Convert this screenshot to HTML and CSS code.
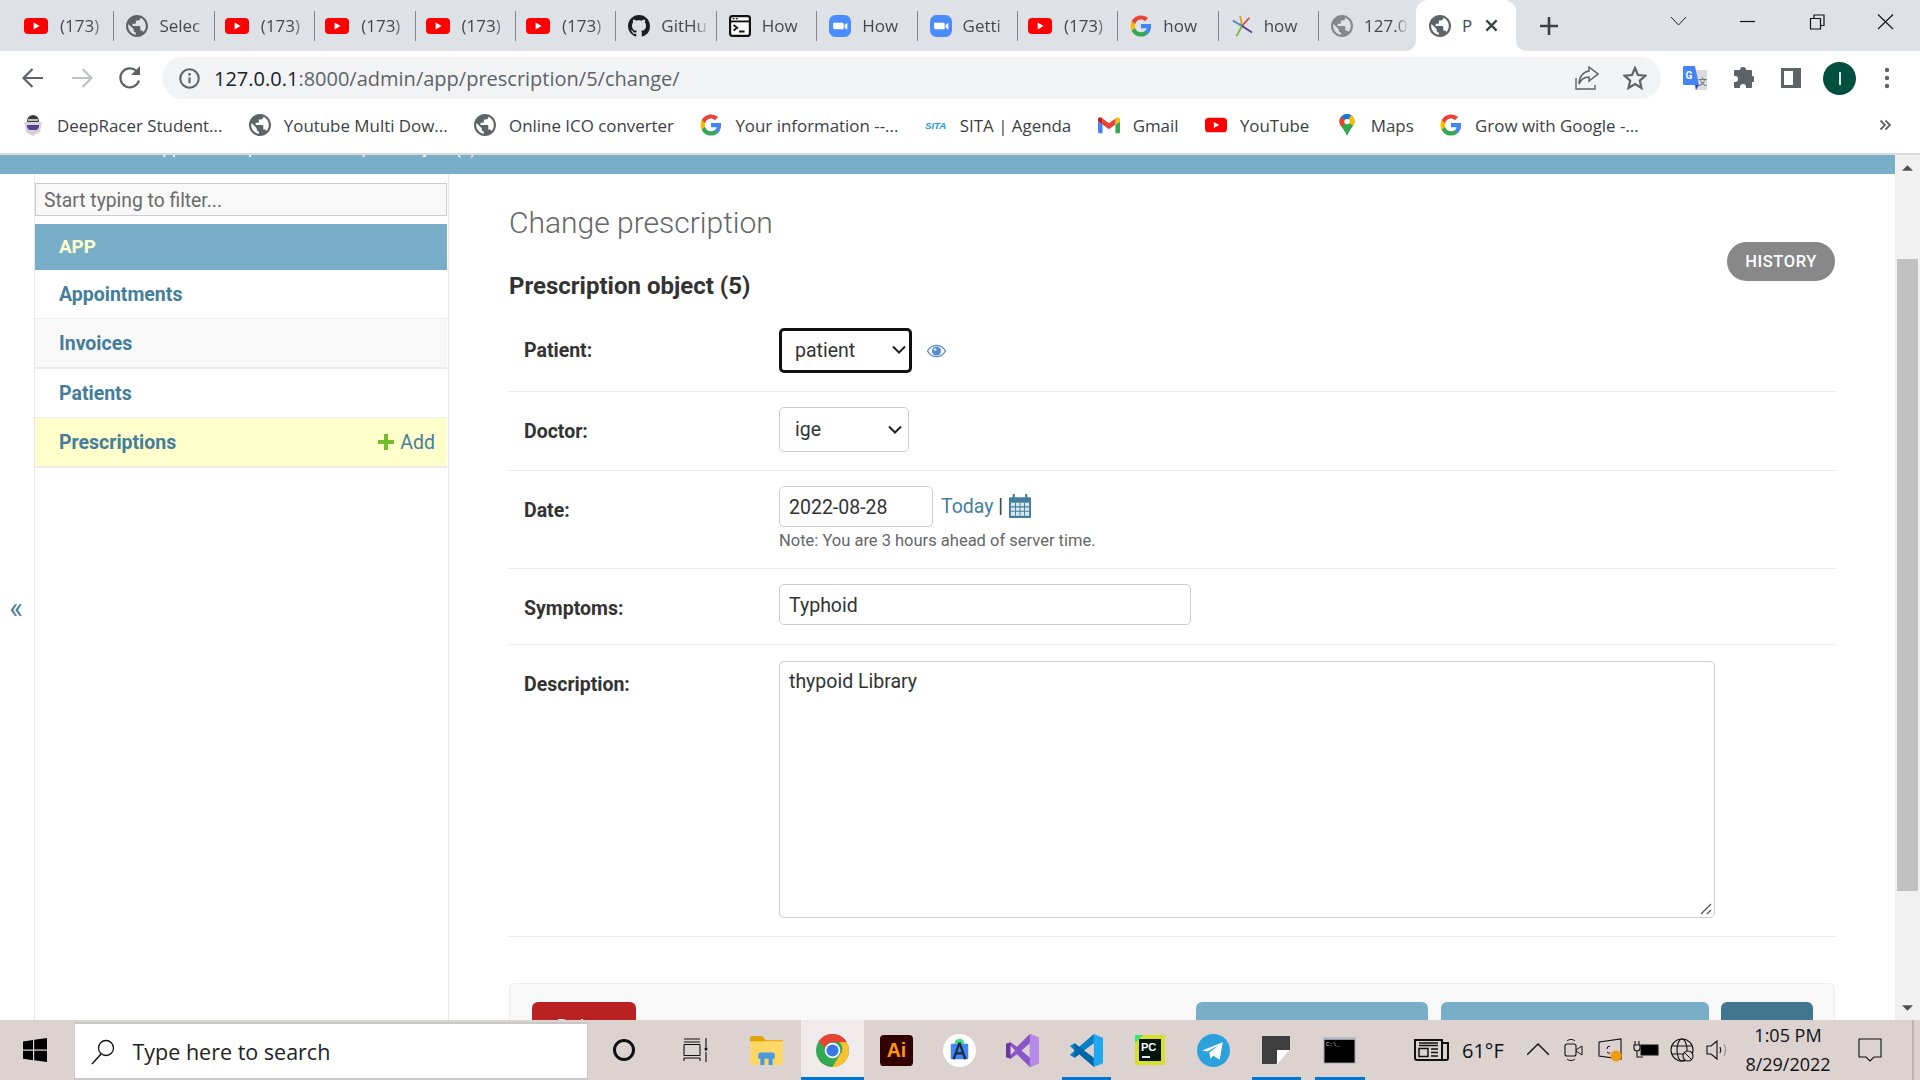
FILE: index.html
```html
<!DOCTYPE html>
<html lang="en">
<head>
    <meta charset="UTF-8">
    <title>Change prescription</title>
    <link rel="stylesheet" href="styles.css">
</head>
<body>

<svg class="sprite" xmlns="http://www.w3.org/2000/svg">
    <symbol id="i-yt" viewBox="0 0 24 16"><rect width="24" height="16" rx="4" fill="#f00"/><path d="M9.600 4.600v6.800l6-3.400z" fill="#fff"/></symbol>
    <symbol id="i-globe" viewBox="2 2 20 20"><path d="M12 2C6.480 2 2 6.480 2 12s4.480 10 10 10 10-4.480 10-10S17.520 2 12 2zm-1 17.930c-3.950-.49-7-3.850-7-7.930 0-.62.08-1.210.21-1.790L9 15v1c0 1.100.9 2 2 2v1.930zm6.900-2.540c-.26-.81-1-1.390-1.900-1.390h-1v-3c0-.55-.45-1-1-1H8v-2h2c.55 0 1-.45 1-1V7h2c1.100 0 2-.9 2-2v-.41c2.930 1.190 5 4.060 5 7.410 0 2.080-.8 3.970-2.100 5.390z" fill="#5f6368"/></symbol>
    <symbol id="i-g" viewBox="0 0 24 24"><path d="M23 12.300c0-.9-.1-1.700-.2-2.400H12v4.500h6.200c-.3 1.400-1.100 2.600-2.300 3.400v2.900h3.700c2.200-2 3.400-5 3.400-8.400z" fill="#4285f4"/><path d="M12 23.500c3.100 0 5.700-1 7.600-2.800l-3.700-2.900c-1 .7-2.300 1.100-3.900 1.100-3 0-5.500-2-6.400-4.800H1.800v3C3.700 21 7.500 23.500 12 23.500z" fill="#34a853"/><path d="M5.600 14.100c-.5-1.400-.5-2.900 0-4.300v-3H1.800c-1.600 3.200-1.600 7.100 0 10.300z" fill="#fbbc05"/><path d="M12 5c1.700 0 3.200.6 4.400 1.700l3.300-3.300C17.700 1.600 15.100.5 12 .5 7.500.5 3.700 3 1.800 6.800l3.800 3C6.500 7 9 5 12 5z" fill="#ea4335"/></symbol>
    <symbol id="i-github" viewBox="0 0 16 16"><path d="M8 0C3.580 0 0 3.580 0 8c0 3.540 2.290 6.530 5.470 7.590.4.07.55-.17.55-.38 0-.19-.01-.82-.01-1.490-2.010.37-2.530-.49-2.690-.94-.09-.23-.48-.94-.82-1.130-.28-.15-.68-.52-.01-.53.63-.01 1.080.58 1.230.82.72 1.210 1.870.87 2.330.66.07-.52.28-.87.51-1.070-1.780-.2-3.640-.89-3.640-3.950 0-.87.31-1.590.82-2.150-.08-.2-.36-1.020.08-2.120 0 0 .67-.21 2.200.82.64-.18 1.320-.27 2-.27.68 0 1.360.09 2 .27 1.530-1.040 2.200-.82 2.200-.82.44 1.100.16 1.920.08 2.120.51.56.82 1.270.82 2.150 0 3.070-1.870 3.750-3.650 3.950.29.25.54.73.54 1.480 0 1.070-.01 1.930-.01 2.200 0 .21.15.46.55.38A8.010 8.010 0 0016 8c0-4.420-3.580-8-8-8z" fill="#1b1f23"/></symbol>
    <symbol id="i-term" viewBox="0 0 24 24"><rect x="1.200" y="1.200" width="21.600" height="21.600" rx="2.500" fill="#fff" stroke="#111" stroke-width="2.400"/><path d="M1 7h22" stroke="#111" stroke-width="2"/><path d="M4 4h2M7.500 4h2" stroke="#111" stroke-width="1.500"/><path d="M5 11l4 3-4 3M11 18h6" fill="none" stroke="#111" stroke-width="2"/></symbol>
    <symbol id="i-zoom" viewBox="0 0 24 24"><rect width="24" height="24" rx="7" fill="#4a8cff"/><path d="M4.500 8.500h10a1.500 1.500 0 011.500 1.500v5.500H6a1.500 1.500 0 01-1.500-1.500zM17 11l3-2.500v7.500l-3-2.500z" fill="#fff"/></symbol>
    <symbol id="i-star" viewBox="0 0 24 24"><path d="M12 12L10 1" stroke="#e0a020" stroke-width="2"/><path d="M12 12l8-9" stroke="#d04a3a" stroke-width="2"/><path d="M12 12l-10-6" stroke="#3a8ad0" stroke-width="2"/><path d="M12 12L6 23" stroke="#7ab93a" stroke-width="2"/><path d="M12 12l11 7" stroke="#5a3a9a" stroke-width="2"/></symbol>
    <symbol id="i-gmail" viewBox="0 0 24 18"><path d="M1.500 18H5V8.500L0 5v11.500A1.500 1.500 0 001.500 18z" fill="#4285f4"/><path d="M19 18h3.500a1.500 1.500 0 001.500-1.500V5l-5 3.500z" fill="#34a853"/><path d="M19 2v6.500L24 5V3c0-2.500-2.500-3-4-1.800z" fill="#fbbc05"/><path d="M5 8.500V2l7 5.200L19 2v6.500l-7 5.200z" fill="#ea4335"/><path d="M0 3v2l5 3.500V2L4 1.200C2.500 0 0 .5 0 3z" fill="#c5221f"/></symbol>
    <symbol id="i-maps" viewBox="0 0 18 26"><path d="M9 0a9 9 0 019 9c0 5-5 8-9 17C5 17 0 14 0 9a9 9 0 019-9z" fill="#34a853"/><path d="M2 3.500A9 9 0 019 0a9 9 0 015 1.500L9 9z" fill="#1a73e8"/><path d="M2 3.500L9 9l-6.500 6C1 13 0 11 0 9c0-2 .7-4 2-5.500z" fill="#ea4335"/><path d="M14 1.500A9 9 0 0118 9c0 2-1 3.500-2 5L9 9z" fill="#fbbc05"/><circle cx="9" cy="9" r="3.200" fill="#fff"/></symbol>
    <symbol id="i-plus" viewBox="0 0 16 16"><path d="M6 0h4v6h6v4h-6v6H6v-6H0V6h6z" fill="#70bf2b"/></symbol>
    <symbol id="i-chrome" viewBox="0 0 34 34"><circle cx="17" cy="17" r="17" fill="#34a853"/><path d="M17 0a17 17 0 0114.700 8.500H17a8.500 8.500 0 00-8 5.500L2.800 7.500A17 17 0 0117 0z" fill="#ea4335"/><path d="M31.700 8.500A17 17 0 0117 34l7.500-12.500a8.500 8.500 0 00-.5-13z" fill="#fbc02d"/><circle cx="17" cy="17" r="8" fill="#fff"/><circle cx="17" cy="17" r="6.200" fill="#3b78e7"/></symbol>
</svg>

<div class="tabstrip">
    <div class="tab"><svg class="favicon fav-yt"><use href="#i-yt"/></svg><span class="tab-text">(173)</span></div>
    <div class="tab"><svg class="favicon"><use href="#i-globe"/></svg><span class="tab-text">Selec</span></div>
    <div class="tab"><svg class="favicon fav-yt"><use href="#i-yt"/></svg><span class="tab-text">(173)</span></div>
    <div class="tab"><svg class="favicon fav-yt"><use href="#i-yt"/></svg><span class="tab-text">(173)</span></div>
    <div class="tab"><svg class="favicon fav-yt"><use href="#i-yt"/></svg><span class="tab-text">(173)</span></div>
    <div class="tab"><svg class="favicon fav-yt"><use href="#i-yt"/></svg><span class="tab-text">(173)</span></div>
    <div class="tab"><svg class="favicon"><use href="#i-github"/></svg><span class="tab-text">GitHu</span></div>
    <div class="tab"><svg class="favicon"><use href="#i-term"/></svg><span class="tab-text">How</span></div>
    <div class="tab"><svg class="favicon"><use href="#i-zoom"/></svg><span class="tab-text">How</span></div>
    <div class="tab"><svg class="favicon"><use href="#i-zoom"/></svg><span class="tab-text">Getti</span></div>
    <div class="tab"><svg class="favicon fav-yt"><use href="#i-yt"/></svg><span class="tab-text">(173)</span></div>
    <div class="tab"><svg class="favicon"><use href="#i-g"/></svg><span class="tab-text">how</span></div>
    <div class="tab"><svg class="favicon"><use href="#i-star"/></svg><span class="tab-text">how</span></div>
    <div class="tab tab-last"><svg class="favicon fav-dim"><use href="#i-globe"/></svg><span class="tab-text">127.0</span></div>
    <div class="tab tab-active">
        <svg class="favicon"><use href="#i-globe"/></svg><span class="tab-letter">P</span>
        <svg class="tab-close" viewBox="0 0 14 14"><path d="M1.500 1.500l11 11M12.500 1.500l-11 11" stroke="#3c4043" stroke-width="2.400"/></svg>
    </div>
    <svg class="new-tab" viewBox="0 0 18 18"><path d="M9 0v18M0 9h18" stroke="#3c4043" stroke-width="2.600"/></svg>
    <div class="win-controls">
        <svg class="win-btn" viewBox="0 0 69 44"><path d="M27 17l7.500 8 7.500-8" fill="none" stroke="#222" stroke-width="1"/></svg>
        <svg class="win-btn" viewBox="0 0 69 44"><path d="M27 21.500h15" stroke="#111" stroke-width="1.200"/></svg>
        <svg class="win-btn" viewBox="0 0 69 44"><path d="M28.500 18.500h10v10.500h-10zM32 18.500V15h10v10.500h-3.500" fill="none" stroke="#111" stroke-width="1.200"/></svg>
        <svg class="win-btn" viewBox="0 0 69 44"><path d="M27 14.500l15 14.500M42 14.500L27 29" stroke="#111" stroke-width="1.100"/></svg>
    </div>
</div>

<div class="toolbar">
    <svg class="nav-btn" viewBox="0 0 48 42"><path d="M34 21H15M23.500 12L14.500 21l9 9" fill="none" stroke="#5f6368" stroke-width="2.200"/></svg>
    <svg class="nav-btn" viewBox="0 0 48 42"><path d="M15 21h19M25.500 12l9 9-9 9" fill="none" stroke="#bdc1c6" stroke-width="2.200"/></svg>
    <svg class="nav-btn" viewBox="0 0 48 42"><path d="M34 23.500A9.500 9.500 0 1131.500 14" fill="none" stroke="#5f6368" stroke-width="2.200"/><path d="M35 9v9h-9z" fill="#5f6368"/></svg>
    <div class="omnibox">
        <svg class="omni-info" viewBox="0 0 20 20"><circle cx="10" cy="10" r="8.800" fill="none" stroke="#5f6368" stroke-width="2"/><path d="M10 9v5.500" stroke="#5f6368" stroke-width="2"/><circle cx="10" cy="6" r="1.300" fill="#5f6368"/></svg>
        <div class="url"><span class="url-host">127.0.0.1</span>:8000/admin/app/prescription/5/change/</div>
        <svg class="omni-icon share" viewBox="0 0 24 24"><path d="M1 12v11h19v-4" fill="none" stroke="#5f6368" stroke-width="1.400"/><path d="M14 1l9 7-9 7v-4c-5 0-8 2-10 7 0-7 4-12 10-13z" fill="none" stroke="#5f6368" stroke-width="1.500"/></svg>
        <svg class="omni-icon star" viewBox="0 0 24 24"><path d="M12 2l3 7 7.500.7-5.700 5 1.700 7.300-6.500-3.900L5.500 22l1.700-7.300-5.700-5L9 9z" fill="none" stroke="#5f6368" stroke-width="2.200"/></svg>
    </div>
    <div class="ext-icons">
        <svg class="ext translate" viewBox="0 0 24 24"><path d="M9 4h14a1 1 0 011 1v18a1 1 0 01-1 1H12z" fill="#dadce0"/><text x="15" y="19" class="tr-zi">文</text><path d="M1 0h11l4 19H1a1 1 0 01-1-1V1a1 1 0 011-1z" fill="#4285f4"/><path d="M12 19h4l-3 5z" fill="#3449b8"/><text x="2.500" y="13" class="tr-g">G</text></svg>
        <svg class="ext" viewBox="0 0 22 22"><path d="M8 3a3 3 0 016 0h5a1 1 0 011 1v5a3 3 0 010 6v5a1 1 0 01-1 1h-5v-1a3 3 0 00-6 0v1H3a1 1 0 01-1-1v-5h1a3 3 0 000-6H2V4a1 1 0 011-1z" fill="#5f6368"/></svg>
        <svg class="ext" viewBox="0 0 22 22"><rect x="1" y="1" width="20" height="20" fill="#5f6368"/><rect x="4" y="4" width="9" height="14" fill="#fff"/></svg>
        <div class="avatar"><span class="avatar-bar"></span></div>
        <svg class="ext ext-last" viewBox="0 0 22 22"><circle cx="11" cy="3" r="2.200" fill="#5f6368"/><circle cx="11" cy="11" r="2.200" fill="#5f6368"/><circle cx="11" cy="19" r="2.200" fill="#5f6368"/></svg>
    </div>
</div>

<div class="bookmarks">
    <div class="bm"><svg class="bm-icon" viewBox="0 0 22 22"><circle cx="11" cy="7" r="6" fill="#3a3a3a"/><path d="M2 8h18l-2 10-7 4-7-4z" fill="#d5d2dc"/><path d="M5 11h12v2l-2 3H7l-2-3z" fill="#5a3f8f"/><path d="M6 6h10" stroke="#eee" stroke-width="1.500"/></svg>DeepRacer Student...</div>
    <div class="bm"><svg class="bm-icon"><use href="#i-globe"/></svg>Youtube Multi Dow...</div>
    <div class="bm"><svg class="bm-icon"><use href="#i-globe"/></svg>Online ICO converter</div>
    <div class="bm"><svg class="bm-icon"><use href="#i-g"/></svg>Your information --...</div>
    <div class="bm"><svg class="bm-icon" viewBox="0 0 24 22"><text x="0" y="15" class="sita">SITA</text></svg>SITA | Agenda</div>
    <div class="bm"><svg class="bm-icon"><use href="#i-gmail"/></svg>Gmail</div>
    <div class="bm"><svg class="bm-icon"><use href="#i-yt"/></svg>YouTube</div>
    <div class="bm"><svg class="bm-icon"><use href="#i-maps"/></svg>Maps</div>
    <div class="bm"><svg class="bm-icon"><use href="#i-g"/></svg>Grow with Google -...</div>
    <svg class="bm-more" viewBox="0 0 12 12"><path d="M1.500 1.500L6 6l-4.500 4.500M6.500 1.500L11 6l-4.500 4.500" fill="none" stroke="#5f6368" stroke-width="1.800"/></svg>
</div>

<div class="page-area">
    <div class="page">
        <div class="crumbs"><div class="crumbs-text">Home › App › Prescriptions › Prescription object (5)</div></div>
        <div class="main">
            <div class="nav-toggle">«</div>
            <nav class="sidebar">
                <input class="nav-filter" type="text" placeholder="Start typing to filter...">
                <div class="app-title">APP</div>
                <div class="model">Appointments</div>
                <div class="model model-alt">Invoices</div>
                <div class="model model-thin">Patients</div>
                <div class="model model-current">Prescriptions<span class="add-link"><svg class="add-icon"><use href="#i-plus"/></svg>Add</span></div>
            </nav>
            <div class="content">
                <div class="content-head">
                    <div>
                        <h1>Change prescription</h1>
                        <h2>Prescription object (5)</h2>
                    </div>
                    <a class="history">HISTORY</a>
                </div>
                <div class="form-row row-patient">
                    <label>Patient:</label>
                    <select class="select-focus"><option>patient</option></select>
                    <svg class="eye" viewBox="0 0 20 14"><path d="M10 1c4 0 7.500 2.700 9.500 6-2 3.300-5.500 6-9.500 6S2.500 10.300.5 7C2.500 3.700 6 1 10 1z" fill="#fff" stroke="#5a8ecb" stroke-width="1.400"/><circle cx="10" cy="7" r="4.800" fill="#5a8ecb"/><circle cx="8.500" cy="5.500" r="1.500" fill="#cfe0f2"/></svg>
                </div>
                <div class="form-row">
                    <label>Doctor:</label>
                    <select class="select-plain"><option>ige</option></select>
                </div>
                <div class="form-row row-date">
                    <label>Date:</label>
                    <div>
                        <div class="date-line">
                            <input class="input-date" type="text" value="2022-08-28">
                            <span class="shortcuts"><a>Today</a> | </span>
                            <svg class="calendar" viewBox="0 0 23 22" preserveAspectRatio="none"><path d="M0 4a1 1 0 011-1h21a1 1 0 011 1v17a1 1 0 01-1 1H1a1 1 0 01-1-1z" fill="#447e9b"/><path d="M2 8h19v12H2z" fill="#d8e6ee"/><path d="M2 11.800h19M2 15.800h19M6.800 8v12M11.500 8v12M16.200 8v12" stroke="#447e9b" stroke-width="1"/><path d="M5 1v5M18 1v5" stroke="#447e9b" stroke-width="2.400" stroke-linecap="round"/></svg>
                        </div>
                        <div class="timezone">Note: You are 3 hours ahead of server time.</div>
                    </div>
                </div>
                <div class="form-row row-symptoms">
                    <label>Symptoms:</label>
                    <input class="input-text" type="text" value="Typhoid">
                </div>
                <div class="form-row row-description">
                    <label>Description:</label>
                    <div class="area-wrap">
                        <textarea class="input-area">thypoid Library</textarea>
                        <svg class="area-grip" viewBox="0 0 12 12"><path d="M1 11L11 1M7 11l4-4" stroke="#555" stroke-width="1.300"/></svg>
                    </div>
                </div>
                <div class="submit-row">
                    <a class="btn btn-delete">Delete</a>
                    <a class="btn btn-save btn-addanother"></a>
                    <a class="btn btn-save btn-continue"></a>
                    <a class="btn btn-default"></a>
                </div>
            </div>
        </div>
    </div>
    <div class="scrollbar">
        <svg class="scroll-arrow" viewBox="0 0 12 6"><path d="M6 0l6 6H0z" fill="#505050"/></svg>
        <div class="scroll-thumb"></div>
        <svg class="scroll-arrow" viewBox="0 0 12 6"><path d="M0 0h12L6 6z" fill="#505050"/></svg>
    </div>
</div>

<div class="taskbar">
    <div class="start">
        <svg class="win-logo" viewBox="0 0 24 24"><path d="M0 3.400l10-1.400v9.500H0zM11.200 1.800L24 0v11.500H11.200zM0 12.700h10v9.500L0 20.800zM11.200 12.700H24V24l-12.800-1.800z" fill="#000"/></svg>
    </div>
    <div class="search-box">
        <svg class="search-icon" viewBox="0 0 24 26"><circle cx="15" cy="9" r="7.500" fill="none" stroke="#111" stroke-width="1.300"/><path d="M10 15L1 25" stroke="#111" stroke-width="1.500"/></svg>
        Type here to search
    </div>
    <div class="tb-btn tb-wide"><svg class="tb-icon" viewBox="0 0 24 24"><circle cx="12" cy="12" r="9.500" fill="none" stroke="#111" stroke-width="3"/></svg></div>
    <div class="tb-btn tb-wide"><svg class="tb-icon tb-taskview" viewBox="0 0 26 24"><path d="M1 1h16M1 4h16M1 6.500v11M17 6.500v11M1 6.500h16M1 17.500h16M1 20h16M1 20v3M17 20v3M23 0v9M23 14v10" fill="none" stroke="#111" stroke-width="1.100"/><rect x="21.700" y="9.500" width="2.600" height="3" fill="#111"/></svg></div>
    <div class="tb-btn tb-explorer"><svg class="tb-icon tb-big" viewBox="0 0 32 28"><path d="M0 2a2 2 0 012-2h10l3 4h17v4H0z" fill="#e0a30b"/><path d="M0 5h32v21a2 2 0 01-2 2H2a2 2 0 01-2-2z" fill="#ffd766"/><path d="M10 28v-6H8v-4a2 2 0 012-2h12a2 2 0 012 2v4h-2v6h-4v-6h-4v6z" fill="#4a9ae0"/></svg></div>
    <div class="tb-btn tb-chrome"><svg class="tb-icon tb-big"><use href="#i-chrome"/></svg></div>
    <div class="tb-btn"><svg class="tb-icon tb-big" viewBox="0 0 34 32"><rect width="34" height="32" rx="4" fill="#330000"/><text x="17" y="23" class="ai-text">Ai</text></svg></div>
    <div class="tb-btn"><svg class="tb-icon tb-big" viewBox="0 0 34 34"><circle cx="17" cy="17" r="17" fill="#fff"/><path d="M12 10a5 5 0 0110 0z" fill="#3ddc84"/><rect x="8" y="10" width="18" height="16" rx="1" fill="#4285f4"/><path d="M17 9l-6 17M17 9l6 17M13 20h8" stroke="#1c2b40" stroke-width="2.400" fill="none"/></svg></div>
    <div class="tb-btn"><svg class="tb-icon tb-big" viewBox="0 0 36 36"><path d="M26 0l10 4v28l-10 4-14-14-7 5-5-2V11l5-2 7 5zM26 10l-9 8 9 8z" fill="#8a54c9"/><path d="M26 0l10 4v28l-10 4z" fill="#b58ae8"/><path d="M0 11l5-2v18l-5-2z" fill="#68379e"/><path d="M5 13v10l5-5z" fill="#dcd3d1"/></svg></div>
    <div class="tb-btn tb-running"><svg class="tb-icon tb-big" viewBox="0 0 36 36"><path d="M26 0l10 4v28l-10 4z" fill="#1fa8f0"/><path d="M26 0v10L10 22l-5 4-5-3 5-5-5-5 5-3 5 4z" fill="#0a7ec2"/><path d="M26 36V26L10 14l-5-4 0 16 5-4 16 14z" fill="#0065a9"/></svg></div>
    <div class="tb-btn"><svg class="tb-icon tb-pc" viewBox="0 0 30 30"><rect width="30" height="30" fill="#d8e02c"/><path d="M0 0h8L0 8z" fill="#3de07a"/><rect x="4" y="4" width="22" height="22" fill="#03140c"/><text x="6" y="16" class="pc-text">PC</text><path d="M7 22h8" stroke="#fff" stroke-width="1.800"/></svg></div>
    <div class="tb-btn"><svg class="tb-icon tb-big" viewBox="0 0 32 32"><circle cx="16" cy="16" r="16" fill="#2aa1da"/><path d="M5 16l20-8-3 17-6-4-3 3-1-6 9-7-11 6z" fill="#fff"/></svg></div>
    <div class="tb-btn tb-running"><svg class="tb-icon tb-sticky" viewBox="0 0 28 28"><rect width="28" height="28" fill="#3f3f3f"/><path d="M28 14v14H14z" fill="#dcd3d1"/><path d="M28 14L15 28V14z" fill="#fff"/></svg></div>
    <div class="tb-btn tb-running"><svg class="tb-icon tb-big" viewBox="0 0 34 28"><rect width="34" height="28" fill="#b8bcc4"/><rect x="1.500" y="3" width="31" height="23.500" fill="#000"/><text x="3" y="9.500" class="cmd-text">C:\_</text></svg></div>
    <div class="tray">
        <svg class="tray-news" viewBox="0 0 36 24"><path d="M1 2h27v20H3a2 2 0 01-2-2zM28 5h6v15a2 2 0 01-2 2h-4" fill="none" stroke="#111" stroke-width="2"/><path d="M5 5h19M5 7.500h19" stroke="#111" stroke-width="1.500"/><rect x="5" y="10.500" width="9" height="8" fill="none" stroke="#111" stroke-width="1.500"/><path d="M17 11h7M17 14.500h7M17 18h7" stroke="#111" stroke-width="1.500"/></svg>
        <span class="tray-temp">61°F</span>
        <div class="tray-cell"><svg class="tray-icon" viewBox="0 0 20 20"><path d="M1 14l9-9 9 9" fill="none" stroke="#111" stroke-width="1.200"/></svg></div>
        <div class="tray-cell"><svg class="tray-icon" viewBox="0 0 20 24"><rect x="1" y="6" width="11" height="12" rx="2" fill="none" stroke="#111" stroke-width="1.100"/><path d="M12 12l6-4v9l-6-4M3 3c2-2 6-2 8 0M3 21c2 2 6 2 8 0" fill="none" stroke="#111" stroke-width="1"/></svg></div>
        <div class="tray-cell"><svg class="tray-icon" viewBox="0 0 24 24"><path d="M1 4l22-3v20L1 18z" fill="none" stroke="#111" stroke-width="1.100"/><path d="M12 8a3 3 0 00-3 3M9 14a3 3 0 003 1" fill="none" stroke="#111" stroke-width="1"/><circle cx="18" cy="18" r="5.500" fill="#f59a0c"/></svg></div>
        <div class="tray-cell"><svg class="tray-icon tray-wide" viewBox="0 0 26 20"><rect x="8" y="5" width="17" height="10" fill="#000" stroke="#111" stroke-width="1"/><path d="M2 1v4M6 1v4M1 5h6v3a3 3 0 01-6 0zM4 11v6h6" fill="none" stroke="#111" stroke-width="1.100"/></svg></div>
        <div class="tray-cell"><svg class="tray-icon" viewBox="0 0 24 24"><circle cx="12" cy="12" r="11" fill="none" stroke="#111" stroke-width="1.100"/><ellipse cx="12" cy="12" rx="5" ry="11" fill="none" stroke="#111" stroke-width="1.100"/><path d="M1 8h22M1 16h22" stroke="#111" stroke-width="1"/><circle cx="18" cy="18" r="5" fill="#dcd3d1" stroke="#111" stroke-width="1.100"/><path d="M14.500 14.500l7 7" stroke="#111" stroke-width="1"/></svg></div>
        <div class="tray-cell"><svg class="tray-icon" viewBox="0 0 24 24"><path d="M1 8h4l6-5v18l-6-5H1z" fill="none" stroke="#111" stroke-width="1.100"/><path d="M14 9c1 2 1 4 0 6" fill="none" stroke="#111" stroke-width="1.100"/><path d="M18 6c2 4 2 8 0 12" fill="none" stroke="#8a8a8a" stroke-width="1"/></svg></div>
        <div class="clock"><div>1:05 PM</div><div>8/29/2022</div></div>
        <div class="notif"><svg class="tray-notif" viewBox="0 0 24 24"><path d="M1 1h22v18h-7l-4 4-4-4H1z" fill="none" stroke="#111" stroke-width="1.100"/></svg></div>
        <div class="show-desktop"></div>
    </div>
</div>

</body>
</html>
```

FILE: styles.css
```css
* {
    box-sizing: border-box;
}

html, body {
    margin: 0;
    padding: 0;
    height: 1080px;
    overflow: hidden;
}

body {
    font-family: "Open Sans", "Noto Sans", sans-serif;
    background: #fff;
    color: #333;
}

.sprite {
    display: block;
    width: 0;
    height: 0;
}

/* browser tabs */
.tabstrip {
    display: flex;
    align-items: stretch;
    height: 51px;
    padding-left: 14px;
    background: #dee1e6;
}

.tab {
    display: flex;
    align-items: center;
    width: 100.400px;
    height: 51px;
    padding: 0 8px 0 10px;
    position: relative;
    font-size: 17px;
    color: #45494e;
}

.tab::after {
    content: "";
    position: absolute;
    right: 0;
    top: 11px;
    width: 1px;
    height: 30px;
    background: #83878c;
}

.tab-last {
    width: 96.800px;
}

.tab-last::after {
    display: none;
}

.favicon {
    flex: 0 0 22px;
    width: 22px;
    height: 22px;
    margin: 0 11px 0 2px;
}

.fav-yt {
    flex: 0 0 24px;
    width: 24px;
    height: 16px;
    margin: 0 12px 0 0;
}

.fav-dim {
    opacity: 0.7;
}

.tab-text {
    flex: 1;
    overflow: hidden;
    white-space: nowrap;
    -webkit-mask-image: linear-gradient(to right, #000 72%, transparent 100%);
    mask-image: linear-gradient(to right, #000 72%, transparent 100%);
}

.tab-active {
    background: #fff;
    border-radius: 12px 12px 0 0;
    padding: 0 0 0 11px;
}

.tab-active::before, .tab-active::after {
    content: "";
    display: block;
    position: absolute;
    top: auto;
    bottom: 0;
    width: 10px;
    height: 10px;
}

.tab-active::before {
    left: -10px;
    background: radial-gradient(circle at 0 0, transparent 9.500px, #fff 10px);
}

.tab-active::after {
    right: -10px;
    background: radial-gradient(circle at 100% 0, transparent 9.500px, #fff 10px);
}

.tab-letter {
    width: 23px;
}

.tab-close {
    width: 13px;
    height: 13px;
}

.new-tab {
    width: 18px;
    height: 18px;
    margin: 17px 0 0 24px;
}

.win-controls {
    display: flex;
    margin-left: auto;
    margin-right: 0;
}

.win-btn {
    width: 69px;
    height: 44px;
}

/* address bar */
.toolbar {
    display: flex;
    height: 52px;
    padding: 6px 0 0 9px;
    background: #fff;
}

.nav-btn {
    flex: 0 0 48px;
    height: 42px;
}

.omnibox {
    display: flex;
    align-items: center;
    flex: 0 0 1499px;
    height: 42px;
    margin-left: 9px;
    padding: 0 14px 0 17px;
    border-radius: 21px;
    background: #f1f3f4;
}

.omni-info {
    width: 21px;
    height: 21px;
}

.url {
    flex: 1;
    margin-left: 14px;
    font-size: 20px;
    color: #5f6368;
}

.url-host {
    color: #202124;
}

.omni-icon {
    width: 24px;
    height: 24px;
}

.share {
    margin-right: 24px;
}

.ext-icons {
    display: flex;
    align-items: center;
    height: 42px;
    margin-left: 22px;
}

.ext {
    flex: 0 0 22px;
    height: 22px;
    margin-right: 26px;
}

.ext-last {
    margin-right: 0;
}

.translate {
    flex-basis: 24px;
    height: 24px;
    margin-right: 25px;
}

.tr-g {
    font: bold 10px "Roboto", sans-serif;
    fill: #fff;
}

.tr-zi {
    font: 9px "Noto Sans CJK SC", sans-serif;
    fill: #5f6368;
}

.avatar {
    display: flex;
    align-items: center;
    justify-content: center;
    flex: 0 0 33px;
    height: 33px;
    margin: 0 20px 0 -5px;
    border-radius: 50%;
    background: #014f3f;
}

.avatar-bar {
    width: 2px;
    height: 13px;
    background: #d8e6e0;
}

/* bookmarks */
.bookmarks {
    display: flex;
    align-items: center;
    height: 52px;
    padding: 0 0 6px 22px;
    background: #fff;
    border-bottom: 2px solid #dadada;
    font-size: 16.900px;
    color: #3c4043;
}

.bm {
    display: flex;
    align-items: center;
    margin-right: 26.400px;
    white-space: nowrap;
}

.bm-icon {
    width: 22px;
    height: 22px;
    margin-right: 13px;
}

.sita {
    font: italic bold 10.500px "Liberation Sans", sans-serif;
    fill: #1e9ad6;
}

.bm-more {
    width: 12px;
    height: 12px;
    margin-left: auto;
    margin-right: 29px;
}

/* page under the browser chrome */
.page-area {
    display: flex;
    height: 865px;
}

.page {
    flex: 1;
    overflow: hidden;
    font-family: Roboto, sans-serif;
}

.crumbs {
    height: 19px;
    overflow: hidden;
    background: #79aec8;
}

.crumbs-text {
    margin-top: -17px;
    padding-left: 92px;
    line-height: 20px;
    font-size: 17px;
    color: #fff;
    white-space: nowrap;
}

.main {
    display: flex;
    height: 846px;
}

.nav-toggle {
    display: flex;
    align-items: center;
    justify-content: center;
    flex: 0 0 35px;
    padding: 22px 2px 0 0;
    border-right: 1px solid #eaeaea;
    font-size: 29px;
    color: #447e9b;
}

.sidebar {
    flex: 0 0 414px;
    padding: 9px 1px 0 0;
    border-right: 1px solid #eaeaea;
}

.nav-filter {
    display: block;
    width: 100%;
    height: 33px;
    padding: 1px 8px 0;
    border: 1px solid #ccc;
    border-radius: 0;
    background: #f8f8f8;
    font: 19.300px Roboto, sans-serif;
}

.nav-filter::placeholder {
    color: #6b6b6b;
}

.app-title {
    height: 46px;
    margin-top: 8px;
    padding-left: 24px;
    line-height: 46px;
    background: #79aec8;
    font-size: 18.800px;
    font-weight: 700;
    color: #ffc;
}

.model {
    display: flex;
    align-items: center;
    justify-content: space-between;
    height: 49px;
    padding: 0 12px 0 24px;
    border-bottom: 1px solid #eee;
    font-size: 19.500px;
    font-weight: 700;
    color: #447e9b;
}

.model-alt {
    height: 50px;
    background: #f8f8f8;
    border-bottom: 2px solid #eaeaea;
}

.model-thin {
    height: 49px;
}

.model-current {
    height: 50px;
    background: #ffc;
    border-bottom: 2px solid #eaeaea;
}

.add-link {
    display: flex;
    align-items: center;
    font-weight: 400;
}

.add-icon {
    width: 16px;
    height: 16px;
    margin-right: 6px;
}

.content {
    flex: 1;
    padding: 0 60px;
}

.content-head {
    display: flex;
    justify-content: space-between;
    height: 136px;
}

h1 {
    margin: 30px 0 0;
    line-height: 38px;
    font-size: 30px;
    font-weight: 300;
    color: #666;
}

h2 {
    margin: 30px 0 0;
    line-height: 28px;
    font-size: 24px;
    font-weight: 700;
    color: #333;
}

.history {
    align-self: flex-start;
    margin-top: 68px;
    padding: 0 18px;
    line-height: 39px;
    border-radius: 20px;
    background: #888;
    font-size: 16.500px;
    font-weight: 500;
    letter-spacing: 0.6px;
    color: #fff;
}

.form-row {
    display: flex;
    padding: 15px 0 18px;
    border-bottom: 1px solid #eaeaea;
    font-size: 19.500px;
}

.row-patient {
    align-items: center;
    height: 82px;
    padding: 0 0 1px;
}

.row-date {
    padding-bottom: 16px;
}

.row-symptoms {
    padding-bottom: 19px;
}

.row-description {
    padding-top: 16px;
}

.form-row label {
    flex: 0 0 270px;
    padding: 13px 0 0 15px;
    font-weight: 700;
    color: #333;
}

.row-patient label {
    padding-top: 1px;
}

.row-description label {
    padding-top: 12px;
}

select, .input-date, .input-text, .input-area {
    font: 19.500px Roboto, sans-serif;
    color: #333;
    background-color: #fff;
}

select {
    appearance: none;
    -webkit-appearance: none;
    height: 45px;
    padding: 0 0 0 15px;
    border-radius: 5px;
    background-image: url("data:image/svg+xml,%3Csvg xmlns='http://www.w3.org/2000/svg' width='14' height='9'%3E%3Cpath d='M1 1.500l6 6 6-6' fill='none' stroke='%23222' stroke-width='2'/%3E%3C/svg%3E");
    background-repeat: no-repeat;
    background-size: 14px 9px;
}

.select-focus {
    width: 133px;
    padding-left: 13px;
    border: 3px solid #111;
    outline: none;
    background-position: 110px 14px;
}

.select-plain {
    width: 130px;
    border: 1px solid #ccc;
    background-position: 108px 17px;
}

.eye {
    width: 19px;
    height: 14px;
    margin: 2px 0 0 15px;
}

.date-line {
    display: flex;
    align-items: center;
}

.input-date {
    width: 154px;
    height: 41px;
    padding: 1px 9px 0;
    border: 1px solid #ccc;
    border-radius: 5px;
}

.shortcuts {
    margin-left: 8px;
    white-space: pre;
    font-size: 19.500px;
    margin-top: -1px;
}

.shortcuts a {
    color: #447e9b;
}

.calendar {
    width: 22px;
    height: 24px;
    margin: -1px 0 0 1px;
}

.timezone {
    margin-top: 2px;
    line-height: 23px;
    font-size: 16.500px;
    color: #666;
}

.input-text {
    width: 412px;
    height: 41px;
    padding: 1px 9px 0;
    border: 1px solid #ccc;
    border-radius: 5px;
}

.area-wrap {
    position: relative;
}

.input-area {
    display: block;
    width: 936px;
    height: 257px;
    padding: 8px 9px;
    border: 1px solid #ccc;
    border-radius: 5px;
    outline: none;
    resize: none;
}

.area-grip {
    position: absolute;
    right: 3px;
    bottom: 3px;
    width: 12px;
    height: 12px;
}

.submit-row {
    display: flex;
    margin-top: 46px;
    height: 100px;
    padding: 18px 21px 0 22px;
    border: 1px solid #eee;
    border-radius: 6px;
    background: #f8f8f8;
}

.btn {
    height: 50px;
    padding-top: 16px;
    line-height: 20px;
    border-radius: 6px;
    text-align: center;
    font-size: 19.500px;
    color: #fff;
}

.btn-delete {
    width: 104px;
    background: #ba2121;
    margin-right: auto;
}

.btn-save {
    background: #79aec8;
}

.btn-addanother {
    width: 232px;
}

.btn-continue {
    width: 268px;
    margin-left: 13px;
}

.btn-default {
    width: 92px;
    margin-left: 12px;
    background: #417690;
}

/* page scrollbar */
.scrollbar {
    display: flex;
    flex-direction: column;
    align-items: center;
    flex: 0 0 25px;
    padding-top: 10px;
    background: #f1f1f1;
}

.scroll-arrow {
    width: 11px;
    height: 6px;
}

.scroll-thumb {
    width: 21px;
    height: 632px;
    margin: 88px 0 114px;
    background: #c1c1c1;
}

/* windows taskbar */
.taskbar {
    display: flex;
    align-items: center;
    height: 60px;
    background: #dcd3d1;
}

.start {
    display: flex;
    align-items: center;
    justify-content: center;
    flex: 0 0 73.500px;
    padding-right: 3px;
}

.win-logo {
    width: 24px;
    height: 24px;
}

.search-box {
    display: flex;
    align-items: center;
    flex: 0 0 514px;
    height: 58px;
    margin-top: 1px;
    padding: 2px 0 0 16px;
    background: #fff;
    border: 2px solid #c9c9c9;
    border-width: 2px 1px;
    font-size: 21.500px;
    color: #222;
}

.search-icon {
    width: 24px;
    height: 26px;
    margin-right: 18px;
}

.tb-btn {
    display: flex;
    align-items: center;
    justify-content: center;
    flex: 0 0 63.400px;
    height: 60px;
    position: relative;
}

.tb-wide {
    flex-basis: 72px;
}

.tb-explorer {
    flex-basis: 69.500px;
}

.tb-chrome {
    background: #f0ebea;
}

.tb-chrome::after, .tb-running::after {
    content: "";
    position: absolute;
    bottom: 0;
    left: 7px;
    right: 7px;
    height: 3px;
    background: #0078d4;
}

.tb-chrome::after {
    left: 0;
    right: 0;
}

.tb-icon {
    width: 24px;
    height: 24px;
}

.tb-big {
    width: 33px;
    height: 33px;
}

.tb-taskview {
    width: 26px;
}

.tb-pc {
    width: 30px;
    height: 30px;
}

.tb-sticky {
    width: 28px;
    height: 28px;
}

.ai-text {
    font: bold 20px "Liberation Sans", sans-serif;
    fill: #ff9a00;
    text-anchor: middle;
}

.pc-text {
    font: bold 11px "Liberation Sans", sans-serif;
    fill: #fff;
}

.cmd-text {
    font: 6px "Liberation Mono", monospace;
    fill: #ddd;
}

.tray {
    display: flex;
    align-items: center;
    margin-left: auto;
    color: #111;
}

.tray-news {
    width: 36px;
    height: 24px;
}

.tray-temp {
    width: 58px;
    margin-left: 12px;
    font-size: 20px;
}

.tray-cell {
    display: flex;
    align-items: center;
    justify-content: center;
    width: 36px;
}

.tray-icon {
    width: 24px;
    height: 24px;
}

.tray-wide {
    width: 26px;
    height: 20px;
}

.clock {
    width: 104px;
    text-align: center;
    font-size: 18px;
    line-height: 29px;
}

.notif {
    display: flex;
    justify-content: center;
    width: 48px;
    margin-left: 6px;
}

.tray-notif {
    width: 24px;
    height: 24px;
}

.show-desktop {
    width: 2px;
    height: 60px;
    margin: 0 6px 0 18px;
    background: #bdb6b4;
}
```
